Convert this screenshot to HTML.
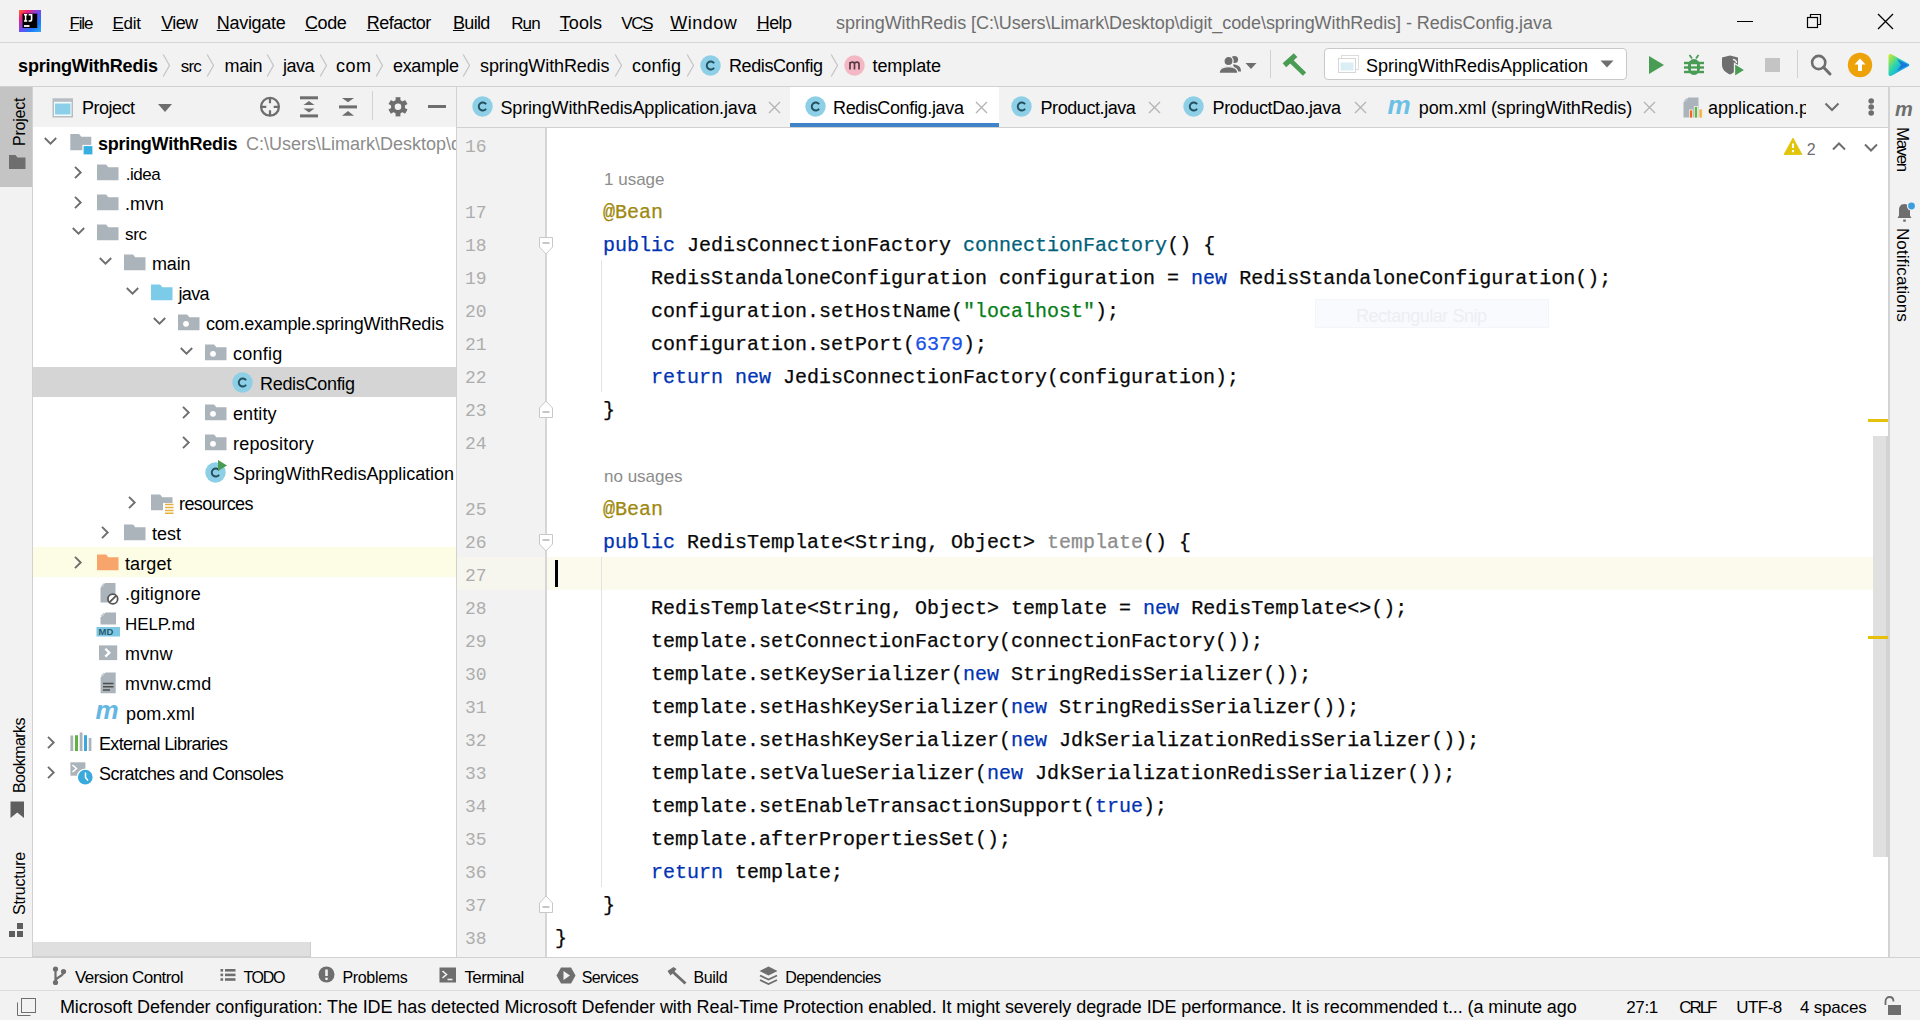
<!DOCTYPE html>
<html><head><meta charset="utf-8"><title>RedisConfig.java</title>
<style>
html,body{margin:0;padding:0;}
body{width:1920px;height:1020px;overflow:hidden;position:relative;background:#f2f2f2;font-family:"Liberation Sans", sans-serif;}
.a{position:absolute;}
.t{position:absolute;white-space:nowrap;line-height:1;}
</style></head><body>

<div class="a" style="left:0px;top:0px;width:1920px;height:42px;background:#f2f2f2;"></div>
<div class="a" style="left:0px;top:42px;width:1920px;height:1px;background:#d6d6d6;"></div>
<div class="a" style="left:0px;top:43px;width:1920px;height:43px;background:#f2f2f2;"></div>
<div class="a" style="left:0px;top:86px;width:1920px;height:1px;background:#d1d1d1;"></div>
<div class="a" style="left:0px;top:87px;width:32px;height:871px;background:#f2f2f2;"></div>
<div class="a" style="left:32px;top:87px;width:1px;height:871px;background:#d1d1d1;"></div>
<div class="a" style="left:33px;top:87px;width:423px;height:40px;background:#f2f2f2;"></div>
<div class="a" style="left:33px;top:127px;width:423px;height:831px;background:#ffffff;"></div>
<div class="a" style="left:456px;top:87px;width:1px;height:871px;background:#d1d1d1;"></div>
<div class="a" style="left:457px;top:87px;width:1432px;height:40px;background:#f2f2f2;"></div>
<div class="a" style="left:457px;top:127px;width:1432px;height:1px;background:#d1d1d1;"></div>
<div class="a" style="left:457px;top:128px;width:1432px;height:830px;background:#ffffff;"></div>
<div class="a" style="left:457px;top:128px;width:88px;height:830px;background:#f2f2f2;"></div>
<div class="a" style="left:545px;top:128px;width:2px;height:830px;background:#d6d6d6;"></div>
<div class="a" style="left:1888px;top:87px;width:2px;height:871px;background:#d3d3d3;"></div>
<div class="a" style="left:0px;top:957px;width:1920px;height:1px;background:#d1d1d1;"></div>
<div class="a" style="left:0px;top:958px;width:1920px;height:32px;background:#f2f2f2;"></div>
<div class="a" style="left:0px;top:990px;width:1920px;height:1px;background:#dcdcdc;"></div>
<div class="a" style="left:0px;top:991px;width:1920px;height:29px;background:#f2f2f2;"></div>
<svg class="a" style="left:19px;top:10px;" width="22" height="22" viewBox="0 0 22 22">
<defs><linearGradient id="ijg" x1="0" y1="0" x2="1" y2="1">
<stop offset="0" stop-color="#ff6b2a"/><stop offset="0.22" stop-color="#f0207a"/><stop offset="0.5" stop-color="#6b4cf0"/><stop offset="0.75" stop-color="#1a7cf7"/><stop offset="1" stop-color="#34a8f7"/></linearGradient></defs>
<rect x="0" y="0" width="22" height="22" fill="url(#ijg)"/>
<rect x="3.5" y="3.6" width="14.7" height="14.4" fill="#000"/>
<path d="M5 4.8H8.2M6.6 4.8V11M5 11H8.2" stroke="#fff" stroke-width="1.5" fill="none"/>
<path d="M9.6 4.8H12.6V9.2C12.6 10.6 11.8 11 10.8 11H9.6" stroke="#fff" stroke-width="1.6" fill="none"/>
<rect x="5" y="15.1" width="5.5" height="1.8" fill="#fff"/>
</svg>
<div class="t" style="left:69.4px;top:15px;font-size:17px;color:#000;letter-spacing:-1.09px;"><u style="text-underline-offset:1px">F</u>ile</div>
<div class="t" style="left:112.5px;top:15px;font-size:17px;color:#000;letter-spacing:-0.308px;"><u style="text-underline-offset:1px">E</u>dit</div>
<div class="t" style="left:161.3px;top:14px;font-size:18px;color:#000;letter-spacing:-0.667px;"><u style="text-underline-offset:1px">V</u>iew</div>
<div class="t" style="left:216.7px;top:14px;font-size:18px;color:#000;letter-spacing:-0.273px;"><u style="text-underline-offset:1px">N</u>avigate</div>
<div class="t" style="left:305.0px;top:14px;font-size:18px;color:#000;letter-spacing:-0.44px;"><u style="text-underline-offset:1px">C</u>ode</div>
<div class="t" style="left:366.7px;top:14px;font-size:18px;color:#000;letter-spacing:-0.491px;"><u style="text-underline-offset:1px">R</u>efactor</div>
<div class="t" style="left:452.9px;top:14px;font-size:18px;color:#000;letter-spacing:-0.637px;"><u style="text-underline-offset:1px">B</u>uild</div>
<div class="t" style="left:511.25px;top:15px;font-size:17px;color:#000;letter-spacing:-0.922px;">R<u style="text-underline-offset:1px">u</u>n</div>
<div class="t" style="left:559.8px;top:14px;font-size:18px;color:#000;letter-spacing:0.043px;"><u style="text-underline-offset:1px">T</u>ools</div>
<div class="t" style="left:621.25px;top:15px;font-size:17px;color:#000;letter-spacing:-1.343px;">VC<u style="text-underline-offset:1px">S</u></div>
<div class="t" style="left:670.2px;top:14px;font-size:18px;color:#000;letter-spacing:0.524px;"><u style="text-underline-offset:1px">W</u>indow</div>
<div class="t" style="left:756.7px;top:14px;font-size:18px;color:#000;letter-spacing:-0.563px;"><u style="text-underline-offset:1px">H</u>elp</div>
<div class="t" style="left:836.0px;top:14px;font-size:18px;color:#6e6e6e;letter-spacing:-0.062px;">springWithRedis [C:\Users\Limark\Desktop\digit_code\springWithRedis] - RedisConfig.java</div>
<div class="a" style="left:1737px;top:21px;width:16px;height:1px;background:#000;"></div>
<svg class="a" style="left:1806px;top:13px;" width="18" height="16" viewBox="0 0 18 16"><rect x="1.5" y="4.5" width="10" height="10" fill="none" stroke="#000" stroke-width="1.2"/><path d="M4.5 4.5V1.5H14.5V11.5H11.5" fill="none" stroke="#000" stroke-width="1.2"/></svg>
<svg class="a" style="left:1877px;top:13px;" width="17" height="17" viewBox="0 0 17 17"><path d="M1 1L16 16M16 1L1 16" stroke="#000" stroke-width="1.3"/></svg>
<div class="t" style="left:18.1px;top:57px;font-size:18px;color:#000;font-weight:bold;letter-spacing:-0.209px;">springWithRedis</div>
<svg class="a" style="left:161.5px;top:53px;" width="9" height="25" viewBox="0 0 9 25"><path d="M1.2 1.5L7.5 12.5L1.2 23.5" fill="none" stroke="#c6c6c6" stroke-width="1.3"/></svg>
<div class="t" style="left:180.8px;top:58px;font-size:17px;color:#000;letter-spacing:-0.898px;">src</div>
<svg class="a" style="left:205.5px;top:53px;" width="9" height="25" viewBox="0 0 9 25"><path d="M1.2 1.5L7.5 12.5L1.2 23.5" fill="none" stroke="#c6c6c6" stroke-width="1.3"/></svg>
<div class="t" style="left:224.5px;top:57px;font-size:18px;color:#000;letter-spacing:-0.353px;">main</div>
<svg class="a" style="left:265.5px;top:53px;" width="9" height="25" viewBox="0 0 9 25"><path d="M1.2 1.5L7.5 12.5L1.2 23.5" fill="none" stroke="#c6c6c6" stroke-width="1.3"/></svg>
<div class="t" style="left:282.95px;top:57px;font-size:18px;color:#000;letter-spacing:-0.523px;">java</div>
<svg class="a" style="left:318.5px;top:53px;" width="9" height="25" viewBox="0 0 9 25"><path d="M1.2 1.5L7.5 12.5L1.2 23.5" fill="none" stroke="#c6c6c6" stroke-width="1.3"/></svg>
<div class="t" style="left:336.0px;top:57px;font-size:18px;color:#000;letter-spacing:0.49px;">com</div>
<svg class="a" style="left:374.5px;top:53px;" width="9" height="25" viewBox="0 0 9 25"><path d="M1.2 1.5L7.5 12.5L1.2 23.5" fill="none" stroke="#c6c6c6" stroke-width="1.3"/></svg>
<div class="t" style="left:393.0px;top:57px;font-size:18px;color:#000;letter-spacing:-0.34px;">example</div>
<svg class="a" style="left:461.5px;top:53px;" width="9" height="25" viewBox="0 0 9 25"><path d="M1.2 1.5L7.5 12.5L1.2 23.5" fill="none" stroke="#c6c6c6" stroke-width="1.3"/></svg>
<div class="t" style="left:480.0px;top:57px;font-size:18px;color:#000;letter-spacing:-0.11px;">springWithRedis</div>
<svg class="a" style="left:614px;top:53px;" width="9" height="25" viewBox="0 0 9 25"><path d="M1.2 1.5L7.5 12.5L1.2 23.5" fill="none" stroke="#c6c6c6" stroke-width="1.3"/></svg>
<div class="t" style="left:632.0px;top:57px;font-size:18px;color:#000;letter-spacing:0.188px;">config</div>
<svg class="a" style="left:686px;top:53px;" width="9" height="25" viewBox="0 0 9 25"><path d="M1.2 1.5L7.5 12.5L1.2 23.5" fill="none" stroke="#c6c6c6" stroke-width="1.3"/></svg>
<svg class="a" style="left:700px;top:55px;" width="21" height="21" viewBox="0 0 21 21"><circle cx="10.5" cy="10.5" r="10.2" fill="#8dcfe6"/><path d="M14.1 8.3A4 4 0 1 0 14.1 12.7" fill="none" stroke="#23505f" stroke-width="1.9"/></svg>
<div class="t" style="left:729.0px;top:57px;font-size:18px;color:#000;letter-spacing:-0.401px;">RedisConfig</div>
<svg class="a" style="left:830px;top:53px;" width="9" height="25" viewBox="0 0 9 25"><path d="M1.2 1.5L7.5 12.5L1.2 23.5" fill="none" stroke="#c6c6c6" stroke-width="1.3"/></svg>
<svg class="a" style="left:844px;top:55px;" width="21" height="21" viewBox="0 0 21 21"><circle cx="10.5" cy="10.5" r="10.2" fill="#f4b8c4"/><path d="M6.0 14.5V7.0M6.0 9.0C6.0 6.5 10.5 6.5 10.5 9.0V14.5M10.5 9.0C10.5 6.5 15.0 6.5 15.0 9.0V14.5" fill="none" stroke="#5a3a42" stroke-width="1.7"/></svg>
<div class="t" style="left:872.5px;top:57px;font-size:18px;color:#000;letter-spacing:-0.076px;">template</div>
<svg class="a" style="left:1218px;top:54px;" width="40" height="22" viewBox="0 0 40 22">
<circle cx="16.5" cy="5.5" r="3.6" fill="#6e6e6e"/><path d="M15 10.5C20 10.5 23 12.5 23 17.5H17Z" fill="#6e6e6e"/>
<circle cx="10.5" cy="7" r="4.6" fill="#6e6e6e" stroke="#f2f2f2" stroke-width="1.3"/><path d="M1 19.5C1 14.5 4.5 12.6 10.5 12.6S20 14.5 20 19.5Z" fill="#6e6e6e" stroke="#f2f2f2" stroke-width="1.3"/>
<path d="M27.5 9H38.5L33 15Z" fill="#6e6e6e"/></svg>
<div class="a" style="left:1270px;top:50px;width:1px;height:28px;background:#d1d1d1;"></div>
<svg class="a" style="left:1282px;top:53px;" width="25" height="23" viewBox="0 0 25 23"><rect x="-7.5" y="-2.6" width="15" height="5.2" transform="translate(8 7.2) rotate(-42)" fill="#499c54"/><rect x="0" y="-2.3" width="19.5" height="4.6" transform="translate(8.5 7.5) rotate(44)" fill="#499c54"/></svg>
<div class="a" style="left:1324px;top:48px;width:303px;height:32px;background:#ffffff;border:1px solid #c9c9c9;border-radius:4px;box-sizing:border-box;"></div>
<svg class="a" style="left:1337px;top:54px;" width="23" height="20" viewBox="0 0 23 20"><rect x="4.5" y="1.5" width="17" height="14" fill="none" stroke="#dcdcdc" stroke-width="1"/><rect x="1.5" y="4.5" width="17" height="14" fill="#fff" stroke="#d6d6d6" stroke-width="1"/><rect x="3.5" y="8.5" width="13" height="8" fill="#dbeef6"/></svg>
<div class="t" style="left:1366.0px;top:57px;font-size:18px;color:#000;letter-spacing:-0.005px;">SpringWithRedisApplication</div>
<svg class="a" style="left:1600px;top:60px;" width="14" height="8" viewBox="0 0 14 8"><path d="M0.5 0.5H13.5L7 7.5Z" fill="#6e6e6e"/></svg>
<svg class="a" style="left:1648px;top:55px;" width="17" height="20" viewBox="0 0 17 20"><path d="M1 1L16 10L1 19Z" fill="#499c54"/></svg>
<svg class="a" style="left:1684px;top:54px;" width="20" height="22" viewBox="0 0 20 22"><path d="M5.5 1L8 4.5M14.5 1L12 4.5" stroke="#499c54" stroke-width="1.8"/>
<ellipse cx="10" cy="13" rx="6.2" ry="8" fill="#499c54"/>
<g fill="#499c54"><rect x="0" y="7.8" width="20" height="2.4"/><rect x="0" y="12.3" width="20" height="2.4"/><rect x="0" y="16.8" width="20" height="2.4"/></g>
<rect x="7" y="10.3" width="6" height="2" fill="#f2f2f2"/><rect x="7" y="14.6" width="6" height="2" fill="#f2f2f2"/></svg>
<svg class="a" style="left:1720px;top:54px;" width="26" height="24" viewBox="0 0 26 24"><path d="M2 3.5L10 1.5L18 3.5V11C18 15.5 14.5 18.5 10 20.5C5.5 18.5 2 15.5 2 11Z" fill="#6e6e6e"/><path d="M13 5.5C16 6 16.5 8 16.5 9" stroke="#f2f2f2" stroke-width="1.4" fill="none"/><path d="M14.5 9.5L25 16L14.5 22.5Z" fill="#499c54" stroke="#f2f2f2" stroke-width="1.3"/></svg>
<div class="a" style="left:1765px;top:58px;width:15px;height:14px;background:#c4c4c4;"></div>
<div class="a" style="left:1797px;top:50px;width:1px;height:28px;background:#d1d1d1;"></div>
<svg class="a" style="left:1808px;top:52px;" width="26" height="26" viewBox="0 0 26 26"><circle cx="10.7" cy="10.5" r="6.6" fill="none" stroke="#6e6e6e" stroke-width="2.6"/><path d="M15.5 15.3L22 22" stroke="#6e6e6e" stroke-width="3" stroke-linecap="round"/></svg>
<svg class="a" style="left:1847px;top:52px;" width="26" height="26" viewBox="0 0 26 26"><circle cx="13" cy="13" r="12.2" fill="#eda20a"/><path d="M13 6.5L18.5 12.5H15V19H11V12.5H7.5Z" fill="#fff"/></svg>
<svg class="a" style="left:1887px;top:53px;" width="24" height="24" viewBox="0 0 24 24"><defs><linearGradient id="jbg" x1="0" y1="0.1" x2="1" y2="0.9"><stop offset="0" stop-color="#c2ea2d"/><stop offset="0.4" stop-color="#27d3b4"/><stop offset="0.7" stop-color="#1aa6ea"/><stop offset="1" stop-color="#0b5fd6"/></linearGradient></defs>
<path d="M1.5 3C1.5 1 3 0.5 4.5 1.3L21 10.5C22.8 11.5 22.8 12.5 21 13.5L4.5 22.7C3 23.5 1.5 23 1.5 21Z" fill="url(#jbg)"/><path d="M10 6L21 12L10 18L14 12Z" fill="#1565d8" opacity="0.75"/></svg>
<div class="a" style="left:0px;top:87px;width:32px;height:100px;background:#c4c4c4;"></div>
<div class="t" style="left:12px;top:146.0px;font-size:16px;color:#000;letter-spacing:-0.21px;transform-origin:0 0;transform:rotate(-90deg)">Project</div>
<svg class="a" style="left:9px;top:155px;" width="17" height="14" viewBox="0 0 17 14"><path d="M0 0H6.5L8.5 2.5H16.5V14H0Z" fill="#6e6e6e"/></svg>
<div class="t" style="left:12px;top:793.0px;font-size:16px;color:#000;letter-spacing:-0.562px;transform-origin:0 0;transform:rotate(-90deg)">Bookmarks</div>
<svg class="a" style="left:10px;top:801px;" width="15" height="17" viewBox="0 0 15 17"><path d="M0.5 0.5H14V17L7.25 11.5L0.5 17Z" fill="#5e5e5e"/></svg>
<div class="t" style="left:12px;top:915.0px;font-size:16px;color:#000;letter-spacing:-0.21px;transform-origin:0 0;transform:rotate(-90deg)">Structure</div>
<svg class="a" style="left:9px;top:923px;" width="16" height="15" viewBox="0 0 16 15"><rect x="8" y="0" width="6" height="6" fill="#5e5e5e"/><rect x="0" y="8" width="6" height="6" fill="#5e5e5e"/><rect x="8" y="8" width="6" height="6" fill="#5e5e5e"/></svg>
<svg class="a" style="left:52px;top:98px;" width="22" height="20" viewBox="0 0 22 20"><rect x="0.5" y="0.3" width="20.5" height="19.2" fill="#b7bdc2"/><rect x="2" y="3.8" width="17.5" height="14.2" fill="#f4fbfd"/><rect x="3" y="5.5" width="15.5" height="11" fill="#8ccfe9"/></svg>
<div class="t" style="left:82.0px;top:99px;font-size:18px;color:#000;letter-spacing:-0.497px;">Project</div>
<svg class="a" style="left:158px;top:104px;" width="14" height="8" viewBox="0 0 14 8"><path d="M0 0H14L7 8Z" fill="#6e6e6e"/></svg>
<svg class="a" style="left:259px;top:96px;" width="22" height="22" viewBox="0 0 22 22"><circle cx="11" cy="10.8" r="8.9" fill="none" stroke="#6e6e6e" stroke-width="2.3"/><path d="M11 2.5V7.3M11 14.3V19M2.5 10.8H7.3M14.7 10.8H19.5" stroke="#6e6e6e" stroke-width="2.2"/></svg>
<svg class="a" style="left:300px;top:96px;" width="18" height="22" viewBox="0 0 18 22"><g fill="#6e6e6e"><rect x="0" y="0.3" width="18" height="3"/><rect x="0" y="18.4" width="18" height="3"/><path d="M3.5 9L9 5L14.5 9Z"/><path d="M3.5 12.6H14.5L9 16.6Z"/></g></svg>
<svg class="a" style="left:339px;top:96px;" width="18" height="22" viewBox="0 0 18 22"><g fill="#6e6e6e"><path d="M3 2H15L9 6.3Z"/><rect x="0" y="9.4" width="18" height="3"/><path d="M9 15L15 19.8H3Z"/></g></svg>
<div class="a" style="left:372px;top:91px;width:1px;height:29px;background:#d1d1d1;"></div>
<svg class="a" style="left:388px;top:96px;" width="20" height="21" viewBox="0 0 20 21"><g fill="#6e6e6e"><circle cx="10" cy="10.8" r="7"/>
<rect x="7.6" y="1.2" width="4.8" height="19.2"/><rect x="7.6" y="1.2" width="4.8" height="19.2" transform="rotate(60 10 10.8)"/><rect x="7.6" y="1.2" width="4.8" height="19.2" transform="rotate(-60 10 10.8)"/></g>
<circle cx="10" cy="10.8" r="3.3" fill="#f2f2f2"/></svg>
<div class="a" style="left:428px;top:105px;width:18px;height:3px;background:#6e6e6e;"></div>
<div class="a" style="left:33px;top:367px;width:423px;height:30px;background:#d5d5d5;"></div>
<div class="a" style="left:33px;top:547px;width:423px;height:30px;background:#fdfce4;"></div>
<svg class="a" style="left:43px;top:136px;" width="15" height="10" viewBox="0 0 15 10"><path d="M1.8 2L7.5 7.7L13.2 2" fill="none" stroke="#6e6e6e" stroke-width="1.9"/></svg>
<svg class="a" style="left:70px;top:133px;" width="24" height="22" viewBox="0 0 24 22"><path d="M0.3 1H8.3C9.3 1 9.8 1.7 10.5 2.7L11.3 3.7H21.3V17.3H0.3Z" fill="#abb4bb"/><rect x="13" y="12.5" width="10" height="9.5" fill="#36afe0" stroke="#fff" stroke-width="1.2"/></svg>
<div class="t" style="left:98.0px;top:135px;font-size:18px;color:#000;font-weight:bold;letter-spacing:-0.231px;">springWithRedis</div>
<div class="a" style="left:33px;top:127px;width:423px;height:30px;overflow:hidden">
<div class="t" style="left:213px;top:8px;font-size:18px;color:#8c8c8c">C:\Users\Limark\Desktop\digit_code\springWithRedis</div>
</div>
<svg class="a" style="left:73px;top:164.5px;" width="10" height="15" viewBox="0 0 10 15"><path d="M2 1.8L7.7 7.5L2 13.2" fill="none" stroke="#6e6e6e" stroke-width="1.9"/></svg>
<svg class="a" style="left:97px;top:164px;" width="24" height="21" viewBox="0 0 24 21"><path d="M0 0.5H8.3C9.3 0.5 9.8 1.2 10.5 2.2L11.3 3.2H21.5V16.2H0Z" fill="#abb4bb"/></svg>
<div class="t" style="left:125.8px;top:166px;font-size:17px;color:#000;letter-spacing:-0.472px;">.idea</div>
<svg class="a" style="left:73px;top:194.5px;" width="10" height="15" viewBox="0 0 10 15"><path d="M2 1.8L7.7 7.5L2 13.2" fill="none" stroke="#6e6e6e" stroke-width="1.9"/></svg>
<svg class="a" style="left:97px;top:194px;" width="24" height="21" viewBox="0 0 24 21"><path d="M0 0.5H8.3C9.3 0.5 9.8 1.2 10.5 2.2L11.3 3.2H21.5V16.2H0Z" fill="#abb4bb"/></svg>
<div class="t" style="left:125.0px;top:195px;font-size:18px;color:#000;letter-spacing:-0.057px;">.mvn</div>
<svg class="a" style="left:71px;top:226px;" width="15" height="10" viewBox="0 0 15 10"><path d="M1.8 2L7.5 7.7L13.2 2" fill="none" stroke="#6e6e6e" stroke-width="1.9"/></svg>
<svg class="a" style="left:97px;top:224px;" width="24" height="21" viewBox="0 0 24 21"><path d="M0 0.5H8.3C9.3 0.5 9.8 1.2 10.5 2.2L11.3 3.2H21.5V16.2H0Z" fill="#abb4bb"/></svg>
<div class="t" style="left:125.0px;top:226px;font-size:17px;color:#000;letter-spacing:-0.348px;">src</div>
<svg class="a" style="left:98px;top:256px;" width="15" height="10" viewBox="0 0 15 10"><path d="M1.8 2L7.5 7.7L13.2 2" fill="none" stroke="#6e6e6e" stroke-width="1.9"/></svg>
<svg class="a" style="left:124px;top:254px;" width="24" height="21" viewBox="0 0 24 21"><path d="M0 0.5H8.3C9.3 0.5 9.8 1.2 10.5 2.2L11.3 3.2H21.5V16.2H0Z" fill="#abb4bb"/></svg>
<div class="t" style="left:152.0px;top:255px;font-size:18px;color:#000;letter-spacing:-0.153px;">main</div>
<svg class="a" style="left:125px;top:286px;" width="15" height="10" viewBox="0 0 15 10"><path d="M1.8 2L7.5 7.7L13.2 2" fill="none" stroke="#6e6e6e" stroke-width="1.9"/></svg>
<svg class="a" style="left:151px;top:284px;" width="24" height="21" viewBox="0 0 24 21"><path d="M0 0.5H8.3C9.3 0.5 9.8 1.2 10.5 2.2L11.3 3.2H21.5V16.2H0Z" fill="#7ccbe8"/></svg>
<div class="t" style="left:178.45px;top:285px;font-size:18px;color:#000;letter-spacing:-0.623px;">java</div>
<svg class="a" style="left:152px;top:316px;" width="15" height="10" viewBox="0 0 15 10"><path d="M1.8 2L7.5 7.7L13.2 2" fill="none" stroke="#6e6e6e" stroke-width="1.9"/></svg>
<svg class="a" style="left:178px;top:314px;" width="24" height="21" viewBox="0 0 24 21"><path d="M0 0.5H8.3C9.3 0.5 9.8 1.2 10.5 2.2L11.3 3.2H21.5V16.2H0Z" fill="#abb4bb"/><circle cx="8" cy="9.8" r="2.9" fill="#fff"/></svg>
<div class="t" style="left:206.0px;top:315px;font-size:18px;color:#000;letter-spacing:-0.196px;">com.example.springWithRedis</div>
<svg class="a" style="left:179px;top:346px;" width="15" height="10" viewBox="0 0 15 10"><path d="M1.8 2L7.5 7.7L13.2 2" fill="none" stroke="#6e6e6e" stroke-width="1.9"/></svg>
<svg class="a" style="left:205px;top:344px;" width="24" height="21" viewBox="0 0 24 21"><path d="M0 0.5H8.3C9.3 0.5 9.8 1.2 10.5 2.2L11.3 3.2H21.5V16.2H0Z" fill="#abb4bb"/><circle cx="8" cy="9.8" r="2.9" fill="#fff"/></svg>
<div class="t" style="left:233.0px;top:345px;font-size:18px;color:#000;letter-spacing:0.268px;">config</div>
<svg class="a" style="left:232px;top:372px;" width="21" height="21" viewBox="0 0 21 21"><circle cx="10.5" cy="10.5" r="10.2" fill="#8dcfe6"/><path d="M14.1 8.3A4 4 0 1 0 14.1 12.7" fill="none" stroke="#23505f" stroke-width="1.9"/></svg>
<div class="t" style="left:260.0px;top:375px;font-size:18px;color:#000;letter-spacing:-0.301px;">RedisConfig</div>
<svg class="a" style="left:181px;top:404.5px;" width="10" height="15" viewBox="0 0 10 15"><path d="M2 1.8L7.7 7.5L2 13.2" fill="none" stroke="#6e6e6e" stroke-width="1.9"/></svg>
<svg class="a" style="left:205px;top:404px;" width="24" height="21" viewBox="0 0 24 21"><path d="M0 0.5H8.3C9.3 0.5 9.8 1.2 10.5 2.2L11.3 3.2H21.5V16.2H0Z" fill="#abb4bb"/><circle cx="8" cy="9.8" r="2.9" fill="#fff"/></svg>
<div class="t" style="left:233.0px;top:405px;font-size:18px;color:#000;letter-spacing:0.096px;">entity</div>
<svg class="a" style="left:181px;top:434.5px;" width="10" height="15" viewBox="0 0 10 15"><path d="M2 1.8L7.7 7.5L2 13.2" fill="none" stroke="#6e6e6e" stroke-width="1.9"/></svg>
<svg class="a" style="left:205px;top:434px;" width="24" height="21" viewBox="0 0 24 21"><path d="M0 0.5H8.3C9.3 0.5 9.8 1.2 10.5 2.2L11.3 3.2H21.5V16.2H0Z" fill="#abb4bb"/><circle cx="8" cy="9.8" r="2.9" fill="#fff"/></svg>
<div class="t" style="left:233.0px;top:435px;font-size:18px;color:#000;letter-spacing:0.198px;">repository</div>
<svg class="a" style="left:205px;top:462px;" width="21" height="21" viewBox="0 0 21 21"><circle cx="10.5" cy="10.5" r="10.2" fill="#8dcfe6"/><path d="M14.1 8.3A4 4 0 1 0 14.1 12.7" fill="none" stroke="#23505f" stroke-width="1.9"/></svg>
<svg class="a" style="left:218px;top:460px;" width="9" height="11" viewBox="0 0 9 11"><path d="M0 0L9 5.5L0 11Z" fill="#499c54"/></svg>
<div class="t" style="left:233.0px;top:465px;font-size:18px;color:#000;letter-spacing:-0.045px;">SpringWithRedisApplication</div>
<svg class="a" style="left:127px;top:494.5px;" width="10" height="15" viewBox="0 0 10 15"><path d="M2 1.8L7.7 7.5L2 13.2" fill="none" stroke="#6e6e6e" stroke-width="1.9"/></svg>
<svg class="a" style="left:151px;top:494px;" width="24" height="21" viewBox="0 0 24 21"><path d="M0 0.5H8.3C9.3 0.5 9.8 1.2 10.5 2.2L11.3 3.2H21.5V16.2H0Z" fill="#abb4bb"/><rect x="12" y="9" width="12" height="11" fill="#fff"/><path d="M14 10.6H22.5M14 13.5H22.5M14 16.4H22.5M14 19.3H22.5" stroke="#e6b040" stroke-width="1.5"/></svg>
<div class="t" style="left:179.0px;top:495px;font-size:18px;color:#000;letter-spacing:-0.565px;">resources</div>
<svg class="a" style="left:100px;top:524.5px;" width="10" height="15" viewBox="0 0 10 15"><path d="M2 1.8L7.7 7.5L2 13.2" fill="none" stroke="#6e6e6e" stroke-width="1.9"/></svg>
<svg class="a" style="left:124px;top:524px;" width="24" height="21" viewBox="0 0 24 21"><path d="M0 0.5H8.3C9.3 0.5 9.8 1.2 10.5 2.2L11.3 3.2H21.5V16.2H0Z" fill="#abb4bb"/></svg>
<div class="t" style="left:152.0px;top:525px;font-size:18px;color:#000;letter-spacing:-0.027px;">test</div>
<svg class="a" style="left:73px;top:554.5px;" width="10" height="15" viewBox="0 0 10 15"><path d="M2 1.8L7.7 7.5L2 13.2" fill="none" stroke="#6e6e6e" stroke-width="1.9"/></svg>
<svg class="a" style="left:97px;top:554px;" width="24" height="21" viewBox="0 0 24 21"><path d="M0 0.5H8.3C9.3 0.5 9.8 1.2 10.5 2.2L11.3 3.2H21.5V16.2H0Z" fill="#f7a56a"/></svg>
<div class="t" style="left:125.0px;top:555px;font-size:18px;color:#000;letter-spacing:0.102px;">target</div>
<svg class="a" style="left:99px;top:582px;" width="20" height="23" viewBox="0 0 20 23"><path d="M6 1H16.5V20.5H1.5V6Z" fill="#abb4bb"/><path d="M1.5 4.5L5 1V4.5Z" fill="#c2c9ce"/><circle cx="13.8" cy="17" r="4.9" fill="#fff" stroke="#555" stroke-width="1.8"/><path d="M10.4 20.4L17.2 13.6" stroke="#555" stroke-width="1.8"/></svg>
<div class="t" style="left:125.0px;top:585px;font-size:18px;color:#000;letter-spacing:0.203px;">.gitignore</div>
<svg class="a" style="left:96px;top:612px;" width="25" height="25" viewBox="0 0 25 25"><path d="M9.5 0.5H20V12.5H4.5V5.5Z" fill="#abb4bb"/><path d="M4.5 4L8 0.5V4Z" fill="#c2c9ce"/><rect x="0.5" y="15" width="23.5" height="9.5" fill="#7ec8e3"/><text x="2.5" y="23.2" font-family="Liberation Sans" font-weight="bold" font-size="9.5" fill="#285a6e">MD</text></svg>
<div class="t" style="left:125.0px;top:616px;font-size:17px;color:#000;letter-spacing:-0.092px;">HELP.md</div>
<svg class="a" style="left:99px;top:645px;" width="19" height="16" viewBox="0 0 19 16"><rect x="0" y="0.4" width="18.2" height="14.7" fill="#abb4bb"/><path d="M6.3 3.8L10.3 7.7L6.3 11.6" fill="none" stroke="#fff" stroke-width="2.3"/></svg>
<div class="t" style="left:125.0px;top:645px;font-size:18px;color:#000;letter-spacing:0.177px;">mvnw</div>
<svg class="a" style="left:100px;top:672px;" width="17" height="22" viewBox="0 0 17 22"><path d="M5.5 0.5H15.7V21.2H0.6V5.5Z" fill="#abb4bb"/><path d="M0.6 4L4 0.5V4Z" fill="#c2c9ce"/><path d="M3 11.5H13.5M3 14.7H13.5M3 17.9H10" stroke="#4d4d4d" stroke-width="1.5"/></svg>
<div class="t" style="left:125.0px;top:675px;font-size:18px;color:#000;letter-spacing:0.164px;">mvnw.cmd</div>
<svg class="a" style="left:96px;top:704px;" width="25" height="18" viewBox="0 0 25 18"><text x="-0.5" y="15" font-family="Liberation Sans" font-weight="bold" font-style="italic" font-size="26" fill="#63b7e2">m</text></svg>
<div class="t" style="left:126.0px;top:705px;font-size:18px;color:#000;letter-spacing:0.127px;">pom.xml</div>
<svg class="a" style="left:46px;top:734.5px;" width="10" height="15" viewBox="0 0 10 15"><path d="M2 1.8L7.7 7.5L2 13.2" fill="none" stroke="#6e6e6e" stroke-width="1.9"/></svg>
<svg class="a" style="left:70px;top:732px;" width="23" height="20" viewBox="0 0 23 20"><rect x="0.4" y="3.5" width="2.8" height="15.5" fill="#abb4bb"/><rect x="5" y="3.2" width="3" height="15.8" fill="#5fb33f"/><rect x="9.7" y="0.5" width="2.8" height="18.5" fill="#abb4bb"/><rect x="14" y="3.2" width="3" height="15.8" fill="#3ba7da"/><rect x="18.7" y="6" width="2.7" height="13" fill="#abb4bb"/></svg>
<div class="t" style="left:99.0px;top:735px;font-size:18px;color:#000;letter-spacing:-0.649px;">External Libraries</div>
<svg class="a" style="left:46px;top:764.5px;" width="10" height="15" viewBox="0 0 10 15"><path d="M2 1.8L7.7 7.5L2 13.2" fill="none" stroke="#6e6e6e" stroke-width="1.9"/></svg>
<svg class="a" style="left:70px;top:760px;" width="25" height="25" viewBox="0 0 25 25"><rect x="0.4" y="2.3" width="15" height="13.4" fill="#abb4bb"/><path d="M2.5 5L6.5 8.5L2.5 12" fill="none" stroke="#fff" stroke-width="1.6"/><circle cx="15.3" cy="17.2" r="8" fill="#3aaadd" stroke="#fff" stroke-width="1.3"/><path d="M15.5 12.5V17.5L18 20.5" fill="none" stroke="#fff" stroke-width="1.5"/></svg>
<div class="t" style="left:99.0px;top:765px;font-size:18px;color:#000;letter-spacing:-0.491px;">Scratches and Consoles</div>
<div class="a" style="left:33px;top:942px;width:278px;height:15px;background:#dfdfdf;border-right:1px solid #cfcfcf;border-bottom:1px solid #cfcfcf;box-sizing:border-box;"></div>
<div class="a" style="left:790px;top:87px;width:209px;height:40px;background:#ffffff;"></div>
<div class="a" style="left:790px;top:123px;width:209px;height:4px;background:#4083c9;"></div>
<svg class="a" style="left:472px;top:96px;" width="21" height="21" viewBox="0 0 21 21"><circle cx="10.5" cy="10.5" r="10.2" fill="#8dcfe6"/><path d="M14.1 8.3A4 4 0 1 0 14.1 12.7" fill="none" stroke="#23505f" stroke-width="1.9"/></svg>
<div class="t" style="left:500.4px;top:99px;font-size:18px;color:#000;letter-spacing:-0.133px;">SpringWithRedisApplication.java</div>
<svg class="a" style="left:768px;top:101px;" width="13" height="13" viewBox="0 0 13 13"><path d="M1 1L12 12M12 1L1 12" stroke="#b4b4b4" stroke-width="1.4"/></svg>
<svg class="a" style="left:805px;top:96px;" width="21" height="21" viewBox="0 0 21 21"><circle cx="10.5" cy="10.5" r="10.2" fill="#8dcfe6"/><path d="M14.1 8.3A4 4 0 1 0 14.1 12.7" fill="none" stroke="#23505f" stroke-width="1.9"/></svg>
<div class="t" style="left:833.0px;top:99px;font-size:18px;color:#000;letter-spacing:-0.345px;">RedisConfig.java</div>
<svg class="a" style="left:975px;top:101px;" width="13" height="13" viewBox="0 0 13 13"><path d="M1 1L12 12M12 1L1 12" stroke="#b4b4b4" stroke-width="1.4"/></svg>
<svg class="a" style="left:1011px;top:96px;" width="21" height="21" viewBox="0 0 21 21"><circle cx="10.5" cy="10.5" r="10.2" fill="#8dcfe6"/><path d="M14.1 8.3A4 4 0 1 0 14.1 12.7" fill="none" stroke="#23505f" stroke-width="1.9"/></svg>
<div class="t" style="left:1040.5px;top:99px;font-size:18px;color:#000;letter-spacing:-0.425px;">Product.java</div>
<svg class="a" style="left:1148px;top:101px;" width="13" height="13" viewBox="0 0 13 13"><path d="M1 1L12 12M12 1L1 12" stroke="#b4b4b4" stroke-width="1.4"/></svg>
<svg class="a" style="left:1183px;top:96px;" width="21" height="21" viewBox="0 0 21 21"><circle cx="10.5" cy="10.5" r="10.2" fill="#8dcfe6"/><path d="M14.1 8.3A4 4 0 1 0 14.1 12.7" fill="none" stroke="#23505f" stroke-width="1.9"/></svg>
<div class="t" style="left:1212.5px;top:99px;font-size:18px;color:#000;letter-spacing:-0.329px;">ProductDao.java</div>
<svg class="a" style="left:1354px;top:101px;" width="13" height="13" viewBox="0 0 13 13"><path d="M1 1L12 12M12 1L1 12" stroke="#b4b4b4" stroke-width="1.4"/></svg>
<svg class="a" style="left:1388px;top:97px;" width="26" height="20" viewBox="0 0 26 20"><text x="-0.5" y="17" font-family="Liberation Sans" font-weight="bold" font-style="italic" font-size="26" fill="#6cc0e5">m</text></svg>
<div class="t" style="left:1418.8px;top:99px;font-size:18px;color:#000;letter-spacing:-0.112px;">pom.xml (springWithRedis)</div>
<svg class="a" style="left:1643px;top:101px;" width="13" height="13" viewBox="0 0 13 13"><path d="M1 1L12 12M12 1L1 12" stroke="#b4b4b4" stroke-width="1.4"/></svg>
<svg class="a" style="left:1683px;top:97px;" width="22" height="22" viewBox="0 0 22 22"><path d="M5.5 0.5H15.5V20.5H0.5V5.5Z" fill="#abb4bb"/><path d="M0.5 4L4 0.5V4Z" fill="#c2c9ce"/><rect x="6.5" y="13" width="3.2" height="8" fill="#f26522" stroke="#f2f2f2" stroke-width="0.8"/><rect x="11.3" y="9.5" width="3.2" height="11.5" fill="#62b543" stroke="#f2f2f2" stroke-width="0.8"/><rect x="16" y="12" width="3.2" height="9" fill="#f4af3d" stroke="#f2f2f2" stroke-width="0.8"/></svg>
<div class="a" style="left:1708px;top:95px;width:98px;height:28px;overflow:hidden">
<div class="t" style="left:0px;top:4px;font-size:18px;color:#000">application.properties</div>
</div>
<svg class="a" style="left:1824px;top:102px;" width="16" height="11" viewBox="0 0 16 11"><path d="M1.5 1.5L8 8L14.5 1.5" fill="none" stroke="#6e6e6e" stroke-width="2.1"/></svg>
<svg class="a" style="left:1867px;top:98px;" width="8" height="18" viewBox="0 0 8 18"><circle cx="4.2" cy="3" r="2.8" fill="#6e6e6e"/><circle cx="4.2" cy="9" r="2.8" fill="#6e6e6e"/><circle cx="4.2" cy="15" r="2.8" fill="#6e6e6e"/></svg>
<svg class="a" style="left:1895px;top:102px;" width="20" height="16" viewBox="0 0 20 16"><text x="0" y="14" font-family="Liberation Sans" font-weight="bold" font-style="italic" font-size="20" fill="#6e6e6e">m</text></svg>
<div class="t" style="left:1911px;top:127.1px;font-size:17px;color:#000;letter-spacing:-1.475px;transform-origin:0 0;transform:rotate(90deg)">Maven</div>
<svg class="a" style="left:1895px;top:200px;" width="22" height="24" viewBox="0 0 22 24"><path d="M9.5 4C5.5 4 4 7 4 10V15.5L2.5 18H16.5L15 15.5V10C15 7 13.5 4 9.5 4Z" fill="#6e6e6e"/><rect x="8.2" y="19.5" width="2.6" height="2.2" fill="#6e6e6e"/><circle cx="16.5" cy="6" r="4.6" fill="#f2f2f2"/><circle cx="16.5" cy="6" r="3.4" fill="#3d9ddf"/></svg>
<div class="t" style="left:1911px;top:228.0px;font-size:17px;color:#000;letter-spacing:0.095px;transform-origin:0 0;transform:rotate(90deg)">Notifications</div>
<div class="a" style="left:457px;top:557px;width:88px;height:33px;background:#f7f6ee;"></div>
<div class="a" style="left:547px;top:557px;width:1341px;height:33px;background:#fcfaed;"></div>
<div class="a" style="left:601px;top:260px;width:1px;height:132px;background:#e3e3e3;"></div>
<div class="a" style="left:601px;top:557px;width:1px;height:330px;background:#e3e3e3;"></div>
<div class="t" style="left:465px;top:138px;font-size:18px;color:#adadad;font-family:'Liberation Mono', monospace;">16</div>
<div class="t" style="left:604px;top:171px;font-size:17px;color:#8c8c8c;">1 usage</div>
<div class="t" style="left:465px;top:204px;font-size:18px;color:#adadad;font-family:'Liberation Mono', monospace;">17</div>
<div class="t" style="left:555px;top:203px;font-size:20px;color:#080808;font-family:'Liberation Mono', monospace;-webkit-text-stroke:0.25px currentColor;"><span style="color:#080808">&nbsp;&nbsp;&nbsp;&nbsp;</span><span style="color:#9e880d">@Bean</span></div>
<div class="t" style="left:465px;top:237px;font-size:18px;color:#adadad;font-family:'Liberation Mono', monospace;">18</div>
<div class="t" style="left:555px;top:236px;font-size:20px;color:#080808;font-family:'Liberation Mono', monospace;-webkit-text-stroke:0.25px currentColor;"><span style="color:#080808">&nbsp;&nbsp;&nbsp;&nbsp;</span><span style="color:#0033b3">public</span><span style="color:#080808">&nbsp;JedisConnectionFactory&nbsp;</span><span style="color:#00627a">connectionFactory</span><span style="color:#080808">()&nbsp;{</span></div>
<div class="t" style="left:465px;top:270px;font-size:18px;color:#adadad;font-family:'Liberation Mono', monospace;">19</div>
<div class="t" style="left:555px;top:269px;font-size:20px;color:#080808;font-family:'Liberation Mono', monospace;-webkit-text-stroke:0.25px currentColor;"><span style="color:#080808">&nbsp;&nbsp;&nbsp;&nbsp;&nbsp;&nbsp;&nbsp;&nbsp;RedisStandaloneConfiguration&nbsp;configuration&nbsp;=&nbsp;</span><span style="color:#0033b3">new</span><span style="color:#080808">&nbsp;RedisStandaloneConfiguration();</span></div>
<div class="t" style="left:465px;top:303px;font-size:18px;color:#adadad;font-family:'Liberation Mono', monospace;">20</div>
<div class="t" style="left:555px;top:302px;font-size:20px;color:#080808;font-family:'Liberation Mono', monospace;-webkit-text-stroke:0.25px currentColor;"><span style="color:#080808">&nbsp;&nbsp;&nbsp;&nbsp;&nbsp;&nbsp;&nbsp;&nbsp;configuration.setHostName(</span><span style="color:#067d17">"localhost"</span><span style="color:#080808">);</span></div>
<div class="t" style="left:465px;top:336px;font-size:18px;color:#adadad;font-family:'Liberation Mono', monospace;">21</div>
<div class="t" style="left:555px;top:335px;font-size:20px;color:#080808;font-family:'Liberation Mono', monospace;-webkit-text-stroke:0.25px currentColor;"><span style="color:#080808">&nbsp;&nbsp;&nbsp;&nbsp;&nbsp;&nbsp;&nbsp;&nbsp;configuration.setPort(</span><span style="color:#1750eb">6379</span><span style="color:#080808">);</span></div>
<div class="t" style="left:465px;top:369px;font-size:18px;color:#adadad;font-family:'Liberation Mono', monospace;">22</div>
<div class="t" style="left:555px;top:368px;font-size:20px;color:#080808;font-family:'Liberation Mono', monospace;-webkit-text-stroke:0.25px currentColor;"><span style="color:#080808">&nbsp;&nbsp;&nbsp;&nbsp;&nbsp;&nbsp;&nbsp;&nbsp;</span><span style="color:#0033b3">return&nbsp;new</span><span style="color:#080808">&nbsp;JedisConnectionFactory(configuration);</span></div>
<div class="t" style="left:465px;top:402px;font-size:18px;color:#adadad;font-family:'Liberation Mono', monospace;">23</div>
<div class="t" style="left:555px;top:401px;font-size:20px;color:#080808;font-family:'Liberation Mono', monospace;-webkit-text-stroke:0.25px currentColor;"><span style="color:#080808">&nbsp;&nbsp;&nbsp;&nbsp;}</span></div>
<div class="t" style="left:465px;top:435px;font-size:18px;color:#adadad;font-family:'Liberation Mono', monospace;">24</div>
<div class="t" style="left:604px;top:468px;font-size:17px;color:#8c8c8c;">no usages</div>
<div class="t" style="left:465px;top:501px;font-size:18px;color:#adadad;font-family:'Liberation Mono', monospace;">25</div>
<div class="t" style="left:555px;top:500px;font-size:20px;color:#080808;font-family:'Liberation Mono', monospace;-webkit-text-stroke:0.25px currentColor;"><span style="color:#080808">&nbsp;&nbsp;&nbsp;&nbsp;</span><span style="color:#9e880d">@Bean</span></div>
<div class="t" style="left:465px;top:534px;font-size:18px;color:#adadad;font-family:'Liberation Mono', monospace;">26</div>
<div class="t" style="left:555px;top:533px;font-size:20px;color:#080808;font-family:'Liberation Mono', monospace;-webkit-text-stroke:0.25px currentColor;"><span style="color:#080808">&nbsp;&nbsp;&nbsp;&nbsp;</span><span style="color:#0033b3">public</span><span style="color:#080808">&nbsp;RedisTemplate&lt;String,&nbsp;Object&gt;&nbsp;</span><span style="color:#8c8c8c">template</span><span style="color:#080808">()&nbsp;{</span></div>
<div class="t" style="left:465px;top:567px;font-size:18px;color:#adadad;font-family:'Liberation Mono', monospace;">27</div>
<div class="t" style="left:465px;top:600px;font-size:18px;color:#adadad;font-family:'Liberation Mono', monospace;">28</div>
<div class="t" style="left:555px;top:599px;font-size:20px;color:#080808;font-family:'Liberation Mono', monospace;-webkit-text-stroke:0.25px currentColor;"><span style="color:#080808">&nbsp;&nbsp;&nbsp;&nbsp;&nbsp;&nbsp;&nbsp;&nbsp;RedisTemplate&lt;String,&nbsp;Object&gt;&nbsp;template&nbsp;=&nbsp;</span><span style="color:#0033b3">new</span><span style="color:#080808">&nbsp;RedisTemplate&lt;&gt;();</span></div>
<div class="t" style="left:465px;top:633px;font-size:18px;color:#adadad;font-family:'Liberation Mono', monospace;">29</div>
<div class="t" style="left:555px;top:632px;font-size:20px;color:#080808;font-family:'Liberation Mono', monospace;-webkit-text-stroke:0.25px currentColor;"><span style="color:#080808">&nbsp;&nbsp;&nbsp;&nbsp;&nbsp;&nbsp;&nbsp;&nbsp;template.setConnectionFactory(connectionFactory());</span></div>
<div class="t" style="left:465px;top:666px;font-size:18px;color:#adadad;font-family:'Liberation Mono', monospace;">30</div>
<div class="t" style="left:555px;top:665px;font-size:20px;color:#080808;font-family:'Liberation Mono', monospace;-webkit-text-stroke:0.25px currentColor;"><span style="color:#080808">&nbsp;&nbsp;&nbsp;&nbsp;&nbsp;&nbsp;&nbsp;&nbsp;template.setKeySerializer(</span><span style="color:#0033b3">new</span><span style="color:#080808">&nbsp;StringRedisSerializer());</span></div>
<div class="t" style="left:465px;top:699px;font-size:18px;color:#adadad;font-family:'Liberation Mono', monospace;">31</div>
<div class="t" style="left:555px;top:698px;font-size:20px;color:#080808;font-family:'Liberation Mono', monospace;-webkit-text-stroke:0.25px currentColor;"><span style="color:#080808">&nbsp;&nbsp;&nbsp;&nbsp;&nbsp;&nbsp;&nbsp;&nbsp;template.setHashKeySerializer(</span><span style="color:#0033b3">new</span><span style="color:#080808">&nbsp;StringRedisSerializer());</span></div>
<div class="t" style="left:465px;top:732px;font-size:18px;color:#adadad;font-family:'Liberation Mono', monospace;">32</div>
<div class="t" style="left:555px;top:731px;font-size:20px;color:#080808;font-family:'Liberation Mono', monospace;-webkit-text-stroke:0.25px currentColor;"><span style="color:#080808">&nbsp;&nbsp;&nbsp;&nbsp;&nbsp;&nbsp;&nbsp;&nbsp;template.setHashKeySerializer(</span><span style="color:#0033b3">new</span><span style="color:#080808">&nbsp;JdkSerializationRedisSerializer());</span></div>
<div class="t" style="left:465px;top:765px;font-size:18px;color:#adadad;font-family:'Liberation Mono', monospace;">33</div>
<div class="t" style="left:555px;top:764px;font-size:20px;color:#080808;font-family:'Liberation Mono', monospace;-webkit-text-stroke:0.25px currentColor;"><span style="color:#080808">&nbsp;&nbsp;&nbsp;&nbsp;&nbsp;&nbsp;&nbsp;&nbsp;template.setValueSerializer(</span><span style="color:#0033b3">new</span><span style="color:#080808">&nbsp;JdkSerializationRedisSerializer());</span></div>
<div class="t" style="left:465px;top:798px;font-size:18px;color:#adadad;font-family:'Liberation Mono', monospace;">34</div>
<div class="t" style="left:555px;top:797px;font-size:20px;color:#080808;font-family:'Liberation Mono', monospace;-webkit-text-stroke:0.25px currentColor;"><span style="color:#080808">&nbsp;&nbsp;&nbsp;&nbsp;&nbsp;&nbsp;&nbsp;&nbsp;template.setEnableTransactionSupport(</span><span style="color:#0033b3">true</span><span style="color:#080808">);</span></div>
<div class="t" style="left:465px;top:831px;font-size:18px;color:#adadad;font-family:'Liberation Mono', monospace;">35</div>
<div class="t" style="left:555px;top:830px;font-size:20px;color:#080808;font-family:'Liberation Mono', monospace;-webkit-text-stroke:0.25px currentColor;"><span style="color:#080808">&nbsp;&nbsp;&nbsp;&nbsp;&nbsp;&nbsp;&nbsp;&nbsp;template.afterPropertiesSet();</span></div>
<div class="t" style="left:465px;top:864px;font-size:18px;color:#adadad;font-family:'Liberation Mono', monospace;">36</div>
<div class="t" style="left:555px;top:863px;font-size:20px;color:#080808;font-family:'Liberation Mono', monospace;-webkit-text-stroke:0.25px currentColor;"><span style="color:#080808">&nbsp;&nbsp;&nbsp;&nbsp;&nbsp;&nbsp;&nbsp;&nbsp;</span><span style="color:#0033b3">return</span><span style="color:#080808">&nbsp;template;</span></div>
<div class="t" style="left:465px;top:897px;font-size:18px;color:#adadad;font-family:'Liberation Mono', monospace;">37</div>
<div class="t" style="left:555px;top:896px;font-size:20px;color:#080808;font-family:'Liberation Mono', monospace;-webkit-text-stroke:0.25px currentColor;"><span style="color:#080808">&nbsp;&nbsp;&nbsp;&nbsp;}</span></div>
<div class="t" style="left:465px;top:930px;font-size:18px;color:#adadad;font-family:'Liberation Mono', monospace;">38</div>
<div class="t" style="left:555px;top:929px;font-size:20px;color:#080808;font-family:'Liberation Mono', monospace;-webkit-text-stroke:0.25px currentColor;"><span style="color:#080808">}</span></div>
<div class="a" style="left:555px;top:560px;width:3px;height:27px;background:#000;"></div>
<svg class="a" style="left:539px;top:237px;" width="14" height="18" viewBox="0 0 14 18"><path d="M0.5 0.5H13.5V10L7 17L0.5 10Z" fill="#fff" stroke="#c8c8c8" stroke-width="1"/><path d="M3.5 6H10.5" stroke="#a0a0a0" stroke-width="1.2"/></svg>
<svg class="a" style="left:539px;top:400px;" width="14" height="18" viewBox="0 0 14 18"><path d="M0.5 17.5H13.5V8L7 1L0.5 8Z" fill="#fff" stroke="#c8c8c8" stroke-width="1"/><path d="M3.5 12H10.5" stroke="#a0a0a0" stroke-width="1.2"/></svg>
<svg class="a" style="left:539px;top:534px;" width="14" height="18" viewBox="0 0 14 18"><path d="M0.5 0.5H13.5V10L7 17L0.5 10Z" fill="#fff" stroke="#c8c8c8" stroke-width="1"/><path d="M3.5 6H10.5" stroke="#a0a0a0" stroke-width="1.2"/></svg>
<svg class="a" style="left:539px;top:895px;" width="14" height="18" viewBox="0 0 14 18"><path d="M0.5 17.5H13.5V8L7 1L0.5 8Z" fill="#fff" stroke="#c8c8c8" stroke-width="1"/><path d="M3.5 12H10.5" stroke="#a0a0a0" stroke-width="1.2"/></svg>
<svg class="a" style="left:1783px;top:137px;" width="20" height="18" viewBox="0 0 20 18"><path d="M10 1L19 17.5H1Z" fill="#e2c40a" stroke="#e2c40a" stroke-width="0.8" stroke-linejoin="round"/><path d="M10 6.5V11" stroke="#fff" stroke-width="2"/><rect x="9" y="13" width="2" height="2.2" fill="#fff"/></svg>
<div class="t" style="left:1806.7px;top:142px;font-size:16px;color:#6e6e6e;letter-spacing:-0.58px;">2</div>
<svg class="a" style="left:1831px;top:141px;" width="16" height="11" viewBox="0 0 16 11"><path d="M2 8.5L8 2.5L14 8.5" fill="none" stroke="#6e6e6e" stroke-width="2"/></svg>
<svg class="a" style="left:1863px;top:142px;" width="16" height="11" viewBox="0 0 16 11"><path d="M2 2.5L8 8.5L14 2.5" fill="none" stroke="#6e6e6e" stroke-width="2"/></svg>
<div class="a" style="left:1873px;top:436px;width:15px;height:421px;background:#e0e0e0;border-right:2px solid #d3d3d3;box-sizing:border-box;"></div>
<div class="a" style="left:1868px;top:419px;width:20px;height:3px;background:#e6c00a;"></div>
<div class="a" style="left:1868px;top:636px;width:20px;height:3px;background:#e6c00a;"></div>
<div class="a" style="left:1315px;top:299px;width:234px;height:29px;background:#f9fafd;border:1px solid #f4f5f9;box-sizing:border-box;"></div>
<div class="t" style="left:1356.0px;top:307px;font-size:18px;color:#eceef3;letter-spacing:-0.471px;">Rectangular Snip</div>
<svg class="a" style="left:51px;top:965px;" width="16" height="22" viewBox="0 0 16 22"><path d="M4.5 4V18M12.5 7C12.5 12 5 11.5 4.5 16" fill="none" stroke="#6e6e6e" stroke-width="2.2"/><circle cx="4.5" cy="4" r="2.6" fill="#6e6e6e"/><circle cx="12.5" cy="6.5" r="2.6" fill="#6e6e6e"/><circle cx="4.5" cy="17.5" r="2.6" fill="#6e6e6e"/></svg>
<div class="t" style="left:75.0px;top:969px;font-size:17px;color:#000;letter-spacing:-0.55px;">Version Control</div>
<svg class="a" style="left:220px;top:969px;" width="16" height="12" viewBox="0 0 16 12"><g fill="#6e6e6e"><rect x="0.5" y="0" width="2.6" height="2.6"/><rect x="5" y="0" width="10.5" height="2.6"/><rect x="0.5" y="4.6" width="2.6" height="2.6"/><rect x="5" y="4.6" width="10.5" height="2.6"/><rect x="0.5" y="9.2" width="2.6" height="2.6"/><rect x="5" y="9.2" width="10.5" height="2.6"/></g></svg>
<div class="t" style="left:243.4px;top:970px;font-size:16px;color:#000;letter-spacing:-1.307px;">TODO</div>
<svg class="a" style="left:318px;top:966px;" width="17" height="17" viewBox="0 0 17 17"><circle cx="8.5" cy="8.5" r="8" fill="#6e6e6e"/><rect x="7.2" y="3.5" width="2.6" height="6.5" fill="#f2f2f2"/><circle cx="8.5" cy="12.8" r="1.4" fill="#f2f2f2"/></svg>
<div class="t" style="left:342.4px;top:970px;font-size:16px;color:#000;letter-spacing:-0.314px;">Problems</div>
<svg class="a" style="left:439px;top:967px;" width="17" height="16" viewBox="0 0 17 16"><rect x="0.5" y="0.5" width="16.5" height="15" fill="#6e6e6e"/><path d="M3.5 4L7.5 7.5L3.5 11" fill="none" stroke="#f2f2f2" stroke-width="1.6"/><path d="M8.5 12.5H13.5" stroke="#f2f2f2" stroke-width="1.6"/></svg>
<div class="t" style="left:464.5px;top:969px;font-size:17px;color:#000;letter-spacing:-0.637px;">Terminal</div>
<svg class="a" style="left:556px;top:967px;" width="20" height="17" viewBox="0 0 20 17"><path d="M5 0.5H15L19.5 8.5L15 16.5H5L0.5 8.5Z" fill="#6e6e6e"/><path d="M7.5 4L14 8.5L7.5 13Z" fill="#f2f2f2"/></svg>
<div class="t" style="left:581.7px;top:970px;font-size:16px;color:#000;letter-spacing:-0.623px;">Services</div>
<svg class="a" style="left:666px;top:966px;" width="22" height="19" viewBox="0 0 22 19"><path d="M1.5 5L7.5 1L10.5 3L8.5 5.5L20.5 16.5L18.5 18.5L6.5 7.5L4.5 9.5Z" fill="#6e6e6e"/></svg>
<div class="t" style="left:693.4px;top:970px;font-size:16px;color:#000;letter-spacing:-0.3px;">Build</div>
<svg class="a" style="left:759px;top:966px;" width="20" height="19" viewBox="0 0 20 19"><path d="M9.5 0.5L18.5 5L9.5 9.5L0.5 5Z" fill="#6e6e6e"/><path d="M1 9.5L9.5 13.5L18 9.5M1 14L9.5 18L18 14" fill="none" stroke="#6e6e6e" stroke-width="1.9"/></svg>
<div class="t" style="left:785.2px;top:970px;font-size:16px;color:#000;letter-spacing:-0.556px;">Dependencies</div>
<svg class="a" style="left:17px;top:998px;" width="19" height="18" viewBox="0 0 19 18"><rect x="4.5" y="0.5" width="14" height="14" fill="none" stroke="#6e6e6e" stroke-width="1"/><path d="M0.5 4.5V17.5H13.5" fill="none" stroke="#6e6e6e" stroke-width="1"/></svg>
<div class="t" style="left:59.9px;top:998px;font-size:18px;color:#000;letter-spacing:-0.08px;">Microsoft Defender configuration: The IDE has detected Microsoft Defender with Real-Time Protection enabled. It might severely degrade IDE performance. It is recommended t... (a minute ago</div>
<div class="t" style="left:1626.3px;top:999px;font-size:17px;color:#000;letter-spacing:-0.388px;">27:1</div>
<div class="t" style="left:1679.2px;top:999px;font-size:17px;color:#000;letter-spacing:-2.057px;">CRLF</div>
<div class="t" style="left:1736.2px;top:999px;font-size:17px;color:#000;letter-spacing:-0.524px;">UTF-8</div>
<div class="t" style="left:1800.0px;top:999px;font-size:17px;color:#000;letter-spacing:-0.198px;">4 spaces</div>
<svg class="a" style="left:1882px;top:996px;" width="20" height="20" viewBox="0 0 20 20"><path d="M3.5 9V5.5C3.5 2.5 5.5 1 7.5 1S11.5 2.5 11.5 5.5" fill="none" stroke="#6e6e6e" stroke-width="1.8"/><rect x="6" y="9" width="13" height="10" fill="#6e6e6e"/></svg>
</body></html>
